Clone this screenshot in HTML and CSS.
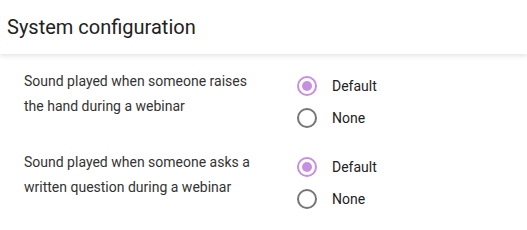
FILE: index.html
```html
<!DOCTYPE html>
<html lang="en">
<head>
    <meta charset="UTF-8">
    <meta name="viewport" content="width=device-width, initial-scale=1.0">
    <title>System configuration</title>
    <link rel="stylesheet" href="styles.css">
</head>
<body>
    <div class="header">System configuration</div>
    <div class="content">
        <!-- Raise hand sound -->
        <div class="setting">
            <div class="setting-label">Sound played when someone raises the hand during a webinar</div>
            <div class="radio-group">
                <label class="radio"><input type="radio" name="hand" checked><span class="mark"></span>Default</label>
                <label class="radio"><input type="radio" name="hand"><span class="mark"></span>None</label>
            </div>
        </div>

        <!-- Question sound -->
        <div class="setting">
            <div class="setting-label">Sound played when someone asks a written question during a webinar</div>
            <div class="radio-group">
                <label class="radio"><input type="radio" name="question" checked><span class="mark"></span>Default</label>
                <label class="radio"><input type="radio" name="question"><span class="mark"></span>None</label>
            </div>
        </div>
    </div>
</body>
</html>
```

FILE: styles.css
```css
body {
    font-family: Roboto, "Liberation Sans", sans-serif;
    margin: 0;
    padding: 0;
    background: #fff;
    color: #333;
}

.header {
    height: 54px;
    line-height: 54px;
    padding: 0 7px;
    font-size: 20px;
    color: #222;
    background: #fff;
    box-shadow: 0 1px 6px rgba(0, 0, 0, 0.15);
    position: relative;
}

.content {
    padding: 16px 24px 0;
}

.setting {
    display: flex;
    margin-bottom: 17px;
}

.setting:last-child {
    margin-bottom: 0;
}

.setting-label {
    width: 240px;
    margin-right: 33px;
    margin-top: -1px;
    font-size: 14px;
    line-height: 25px;
}

.radio-group {
    display: flex;
    flex-direction: column;
}

.radio {
    display: flex;
    align-items: center;
    height: 32px;
    font-size: 14px;
    color: #222;
    cursor: pointer;
}

.radio input {
    display: none;
}

.radio .mark {
    width: 16px;
    height: 16px;
    border: 2px solid #757575;
    border-radius: 50%;
    margin-right: 15px;
    position: relative;
}

.radio input:checked + .mark {
    border-color: #c690e0;
}

.radio input:checked + .mark::after {
    content: "";
    position: absolute;
    top: 3px;
    left: 3px;
    width: 10px;
    height: 10px;
    border-radius: 50%;
    background: #c690e0;
}
```
